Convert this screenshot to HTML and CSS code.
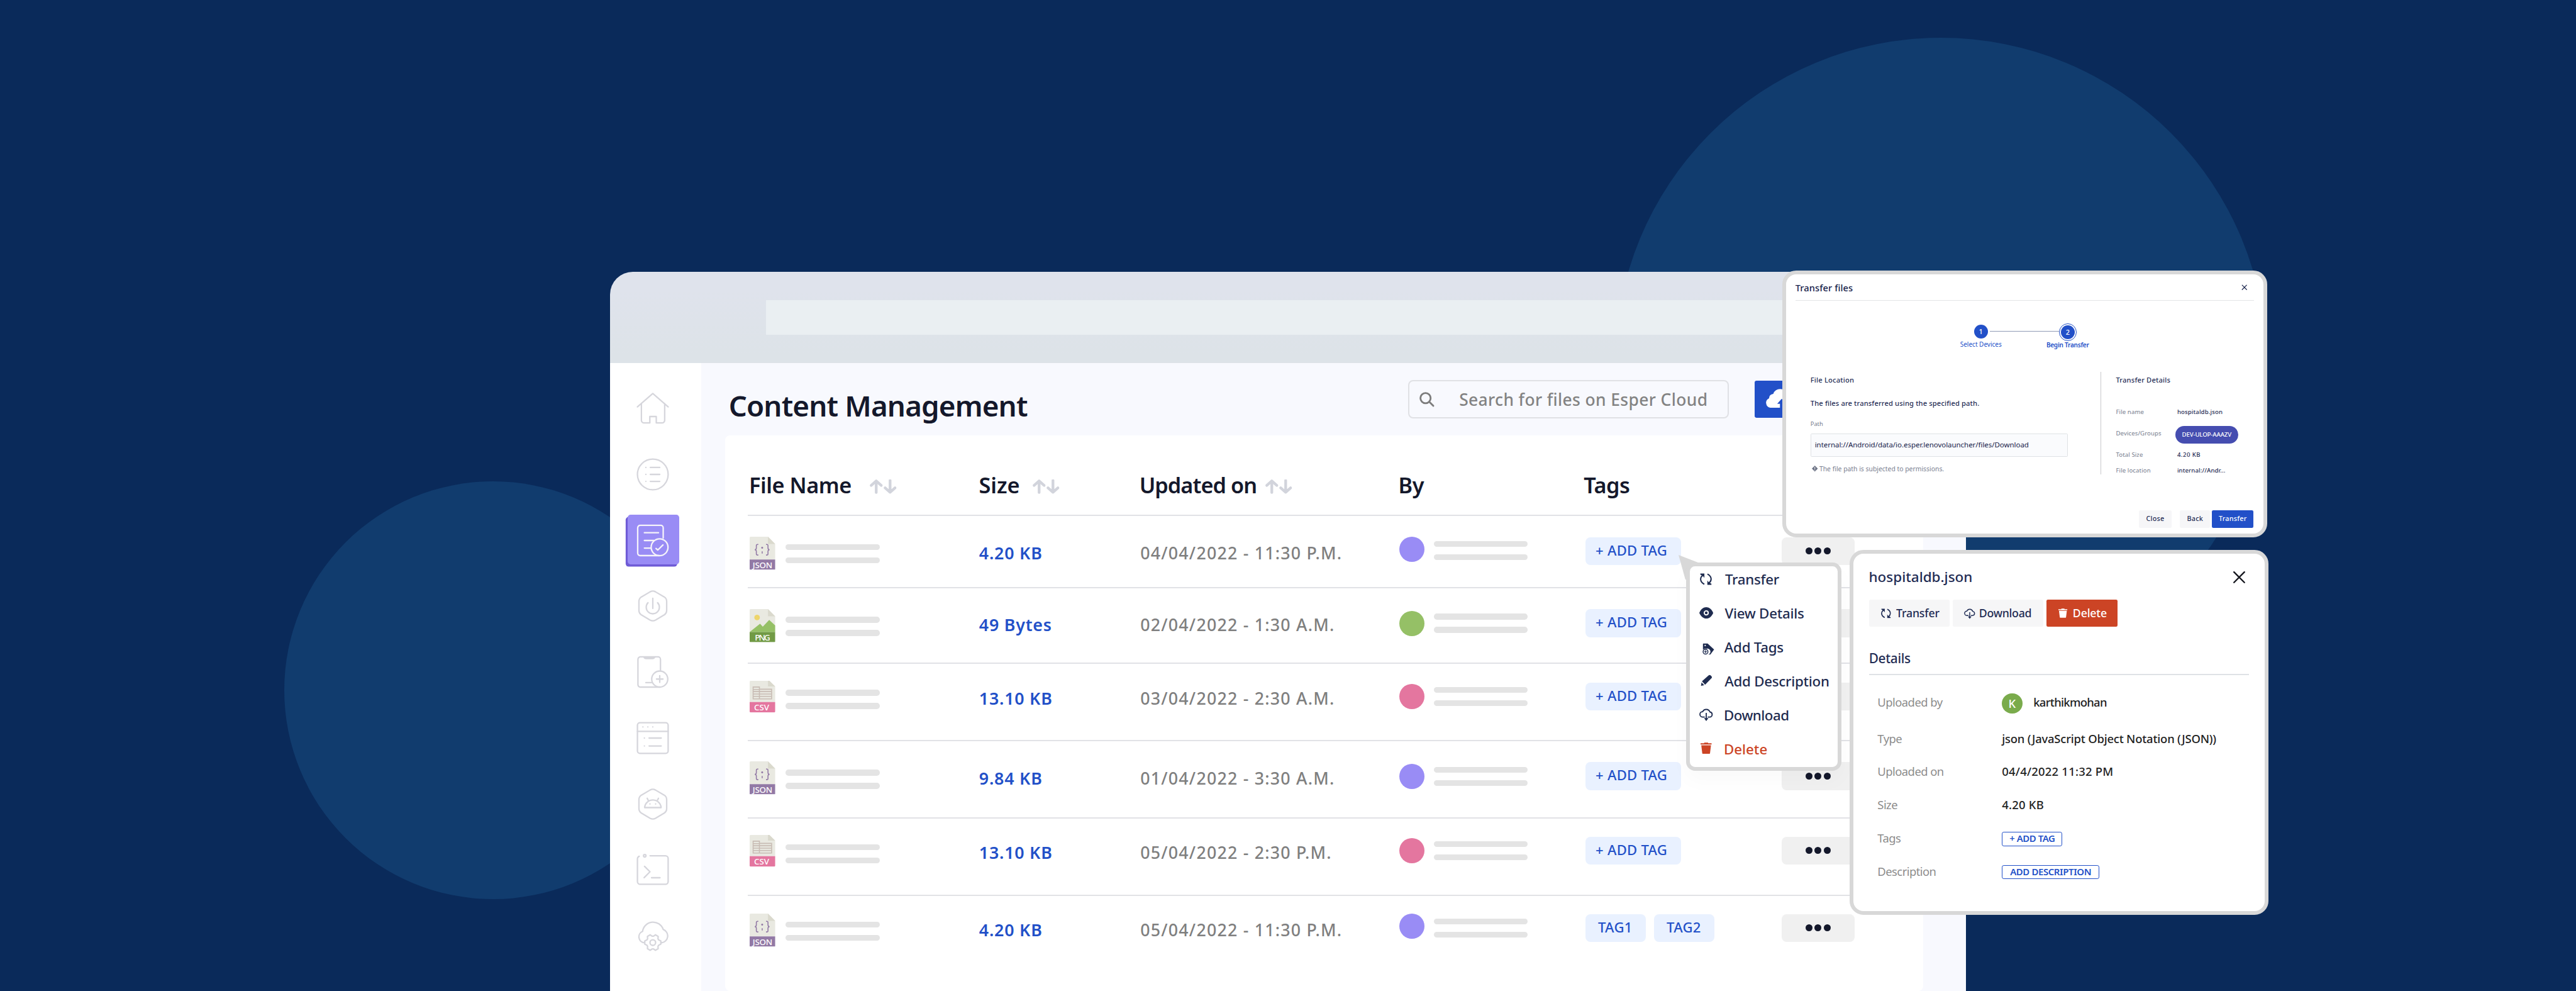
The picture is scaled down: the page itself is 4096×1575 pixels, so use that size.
FILE: index.html
```html
<!DOCTYPE html>
<html lang="en">
<head>
<meta charset="utf-8">
<title>Content Management</title>
<link rel="stylesheet" href="styles.css">
</head>
<body>
<svg class="defs" aria-hidden="true">
  <defs>
    <symbol id="sort" viewBox="0 0 54 29"><path d="M13 26.500V3M3 12 13 3l10 9M41 2v23.500M31 17l10 9 10-9"/></symbol>
    <symbol id="hex" viewBox="0 0 66 66"><path d="M27.500 4.600q5.500-3 11 0L56 14.800q5 3.200 5 9V42q0 6-5 9.200L38.500 61.500q-5.500 3-11 0L10 51.200q-5-3.200-5-9.200V24q0-6 5-9.200Z"/></symbol>
    <symbol id="json" viewBox="0 0 52 67">
      <path d="M2 0H37L51.500 14.500V46H0V2Q0 0 2 0Z" fill="#e9e9e1"/><path d="M37 0 51.500 14.500H37Z" fill="#dad9cd"/>
      <path d="M0 46H51.500V65Q51.500 66.500 50 66.500H1.500Q0 66.500 0 65Z" fill="#9279a5"/>
      <path d="M17.500 15.500h-1.500q-2.500 0-2.500 2.500v5q0 3-3 3.300q3 .3 3 3.300v4.900q0 2.500 2.500 2.500h1.500M33 15.500h1.500q2.500 0 2.500 2.500v5q0 3 3 3.300q-3 .3-3 3.300v4.900q0 2.500-2.500 2.500H33M25.300 29.500v4.500" fill="none" stroke="#9279a5" stroke-width="2"/>
      <circle cx="25.300" cy="22.300" r="1.900" fill="#9279a5"/>
      <text x="6" y="63.300" font-size="17" textLength="40" fill="#fff">JSON</text>
    </symbol>
    <symbol id="png" viewBox="0 0 52 67">
      <path d="M2 0H37L51.500 14.500V46.300H0V2Q0 0 2 0Z" fill="#e9e9e1"/><path d="M37 0 51.500 14.500H37Z" fill="#dad9cd"/>
      <circle cx="15" cy="17" r="5.600" fill="#eed56b"/>
      <path d="M0 46.500 21 29.500 26.500 35.500 39.500 22 51.500 33V46.500Z" fill="#95c066"/>
      <path d="M0 46.500H51.500V65Q51.500 66.800 50 66.800H1.500Q0 66.800 0 65Z" fill="#719a45"/>
      <text x="10.500" y="63.300" font-size="17" textLength="31" fill="#fff">PNG</text>
    </symbol>
    <symbol id="csv" viewBox="0 0 52 64">
      <path d="M2 0H40L51.500 11.500V43H0V2Q0 0 2 0Z" fill="#e9e9e1"/><path d="M37 0H40L51.500 11.500H37Z" fill="#dad9cd"/>
      <path d="M0 43H51.500V62Q51.500 63.700 50 63.700H1.500Q0 63.700 0 62Z" fill="#e4769f"/>
      <path d="M7 12.500H19.700V36.500H7ZM19.700 17H44.300V36.500H19.700ZM7 17.500H19.700M7 21.700H44.300M7 26.600H44.300M7 31.500H44.300" fill="none" stroke="#c8bcb4" stroke-width="2"/>
      <text x="9" y="60.300" font-size="17" textLength="30.500" fill="#fff">CSV</text>
    </symbol>
    <symbol id="transfer" viewBox="0 0 24 24">
      <g fill="none" stroke="currentColor" stroke-width="2.600"><path d="M8.800 22.200C-.500 17.500-.200 9 5.500 4.500"/><path d="M15.200 1.800C24.500 6.500 24.200 15 18.500 19.500"/></g>
      <path d="M.800.600H9V9.500L6.500 6 .800 2.800ZM23.200 23.400H15V14.500L17.500 18 23.200 21.200Z" fill="currentColor"/>
    </symbol>
    <symbol id="eye" viewBox="0 0 28 23"><path d="M0 11.500C6-3.800 22-3.800 28 11.500 22 26.800 6 26.800 0 11.500Z" fill="currentColor"/><circle cx="14" cy="11.500" r="4" fill="none" stroke="#fff" stroke-width="2.400"/></symbol>
    <symbol id="tags" viewBox="0 0 24 24">
      <path d="M1 1.800Q1 .8 2 .8H10.500L23.500 13 16 23.200H12A6 6 0 0 0 8 11.500Q4 10.500 1 13.500Z" fill="currentColor"/><circle cx="5.500" cy="5" r="1.400" fill="#fff"/>
      <circle cx="6.200" cy="17.500" r="4.900" fill="#fff" stroke="currentColor" stroke-width="1.800"/><path d="M6.200 14.500v6M3.200 17.500h6" stroke="currentColor" stroke-width="1.500"/>
    </symbol>
    <symbol id="pencil" viewBox="0 0 24 24"><path d="M16.500 1.500Q18.500 0 20.500 1.800L22.300 3.800Q23.600 5.500 22.500 7L9.200 20.700 2.800 13.800ZM2 15.800 7.400 21.500.800 23Z" fill="currentColor"/></symbol>
    <symbol id="download" viewBox="0 0 28 26"><g fill="none" stroke="currentColor" stroke-width="2.300"><path d="M11 17.200H6.500A5.300 5.300 0 0 1 6.800 6.500 8 8 0 0 1 21.500 7 5.200 5.200 0 0 1 22 17.200H17"/><path d="M14 9V22" /></g><path d="M9.500 19.500H18.500L14 25.500Z" fill="currentColor"/></symbol>
    <symbol id="trash" viewBox="0 0 23 23"><path d="M0 1.500H7.500V0H15.500V1.500H23V4H0ZM1.500 5.500H21.500L19.500 22Q19.400 23 18.400 23H4.600Q3.600 23 3.500 22Z" fill="currentColor"/></symbol>
  </defs>
</svg>

<div class="stage">
  <div class="disc disc-left"></div>
  <div class="disc disc-right"></div>

  <div class="window">
    <div class="browser-bar"><div class="url"></div></div>
    <div class="body">
      <nav class="sidebar">
        <svg class="nav" viewBox="0 0 66 66"><path d="M2 30 33 3 64 30M10 23.500V57a5.500 5.500 0 0 0 5.500 5.500H27V49.500H40V62.500H51.500A5.500 5.500 0 0 0 57 57V23.500"/></svg>
        <svg class="nav" viewBox="0 0 66 66"><circle cx="33" cy="33" r="31"/><path d="M28 19H47M28 33H47M28 47H47M19 19h.01M19 33h.01M19 47h.01"/></svg>
        <div class="active"><svg class="nav" viewBox="0 0 66 66"><path d="M54 28V7.500A5 5 0 0 0 49 2.500H7.500A5 5 0 0 0 2.500 7.500V58.500A5 5 0 0 0 7.500 63.500H46M16 17.300H44.500M16 33H35M16 48.300H29M39.500 49 43 52.300 53.500 42"/><circle cx="46.700" cy="46.700" r="17"/></svg></div>
        <svg class="nav" viewBox="0 0 66 66"><use href="#hex"/><path d="M33 17.500V38M23.300 26.500A13.300 13.300 0 1 0 42.700 26.500"/></svg>
        <svg class="nav" viewBox="0 0 66 66"><path d="M48.500 30V7.500A5 5 0 0 0 43.500 2.500H8A5 5 0 0 0 3 7.500V58.500A5 5 0 0 0 8 63.500H47M19 54.500H31M47 40.500V54M40.500 47.300H53.500"/><path d="M15 3H37Q35.500 6 32.500 6H19.500Q16.500 6 15 3Z" class="solid"/><circle cx="47" cy="47.300" r="16.200"/></svg>
        <svg class="nav" viewBox="0 0 66 66"><rect x="2" y="2" width="62" height="62" rx="5"/><path d="M2 19.500H64M13 10.500h.01M23 10.500h.01M33 10.500h.01M16 33h.01M16 49h.01M25.500 33H50M25.500 49H50"/></svg>
        <svg class="nav" viewBox="0 0 66 66"><use href="#hex"/><path d="M16.500 40A16.700 16.700 0 0 1 49.800 40ZM23.800 25.500 21.700 21.300M42.300 25.500 44.400 21.300M27.300 32.700h.01M38.700 32.700h.01"/></svg>
        <svg class="nav" viewBox="0 0 66 66"><path d="M27.500 5.200H58.500A5.500 5.500 0 0 1 64 10.700V57.300A5.500 5.500 0 0 1 58.500 62.800H7.500A5.500 5.500 0 0 1 2 57.300V11.500Q2 8 5.500 6.200M16.300 26.500 27.300 37.500 15.500 49.300M30.500 49.500H47.500"/><circle cx="16.700" cy="5.200" r="2.500"/></svg>
        <svg class="nav" viewBox="0 0 66 66"><path d="M16 47.500A12 12 0 0 1 12.300 24.500 21.500 21.500 0 0 1 54 20.500 14 14 0 0 1 50.700 47.500"/><path transform="translate(33 47)" d="M16.200-3.100V3.100L11.900 5.300 10.500 7.600 10.800 12.400 5.400 15.600 1.400 12.900H-1.400L-5.400 15.600-10.800 12.400-10.500 7.600-11.900 5.300-16.200 3.100V-3.100L-11.900-5.300-10.500-7.600-10.800-12.400-5.400-15.600-1.400-12.900H1.400L5.400-15.600 10.800-12.400 10.500-7.600 11.900-5.300Z"/><circle cx="33" cy="47" r="5.700"/></svg>
      </nav>

      <main class="main">
        <header class="page-head">
          <h1>Content Management</h1>
          <div class="search">
            <svg viewBox="0 0 30 30"><circle cx="12.300" cy="12.300" r="10.300"/><path d="M20 20 28 28"/></svg>
            <span>Search for files on Esper Cloud</span>
          </div>
          <div class="upload"><svg viewBox="0 0 60 40"><path d="M10 38A10 10 0 0 1 7.500 19 9 9 0 0 1 16 10 15 15 0 0 1 44 10 12 12 0 0 1 50 38Z" fill="#fff"/><path d="M33 20 42 30H36.500V40H29.500V30H24Z" fill="#2250c8"/></svg></div>
        </header>

        <section class="table">
          <div class="head grid">
            <div class="file-h">File Name<svg><use href="#sort"/></svg></div>
            <div class="size-h">Size<svg><use href="#sort"/></svg></div>
            <div class="upd-h">Updated on<svg><use href="#sort"/></svg></div>
            <div class="by-h">By</div>
            <div>Tags</div>
          </div>
          <div class="row grid r1">
            <div class="file"><svg><use href="#json"/></svg><div class="bars"><i></i><i></i></div></div>
            <div class="size">4.20 KB</div><div class="date">04/04/2022 - 11:30 P.M.</div>
            <div class="by violet"><b></b><div class="bars"><i></i><i></i></div></div>
            <div class="tags"><span>+ ADD TAG</span></div><div class="more"><i></i><i></i><i></i></div>
          </div>
          <div class="row grid r2">
            <div class="file"><svg><use href="#png"/></svg><div class="bars"><i></i><i></i></div></div>
            <div class="size">49 Bytes</div><div class="date">02/04/2022 - 1:30 A.M.</div>
            <div class="by green"><b></b><div class="bars"><i></i><i></i></div></div>
            <div class="tags"><span>+ ADD TAG</span></div><div class="more"><i></i><i></i><i></i></div>
          </div>
          <div class="row grid r3">
            <div class="file"><svg class="csv"><use href="#csv"/></svg><div class="bars"><i></i><i></i></div></div>
            <div class="size">13.10 KB</div><div class="date">03/04/2022 - 2:30 A.M.</div>
            <div class="by pink"><b></b><div class="bars"><i></i><i></i></div></div>
            <div class="tags"><span>+ ADD TAG</span></div><div class="more"><i></i><i></i><i></i></div>
          </div>
          <div class="row grid r4">
            <div class="file"><svg><use href="#json"/></svg><div class="bars"><i></i><i></i></div></div>
            <div class="size">9.84 KB</div><div class="date">01/04/2022 - 3:30 A.M.</div>
            <div class="by violet"><b></b><div class="bars"><i></i><i></i></div></div>
            <div class="tags"><span>+ ADD TAG</span></div><div class="more"><i></i><i></i><i></i></div>
          </div>
          <div class="row grid r5">
            <div class="file"><svg class="csv"><use href="#csv"/></svg><div class="bars"><i></i><i></i></div></div>
            <div class="size">13.10 KB</div><div class="date">05/04/2022 - 2:30 P.M.</div>
            <div class="by pink"><b></b><div class="bars"><i></i><i></i></div></div>
            <div class="tags"><span>+ ADD TAG</span></div><div class="more"><i></i><i></i><i></i></div>
          </div>
          <div class="row grid r6">
            <div class="file"><svg><use href="#json"/></svg><div class="bars"><i></i><i></i></div></div>
            <div class="size">4.20 KB</div><div class="date">05/04/2022 - 11:30 P.M.</div>
            <div class="by violet"><b></b><div class="bars"><i></i><i></i></div></div>
            <div class="tags"><span class="short">TAG1</span><span class="short">TAG2</span></div><div class="more"><i></i><i></i><i></i></div>
          </div>
        </section>
      </main>
    </div>
  </div>

  <div class="menu">
    <svg class="tail" viewBox="0 0 50 50"><path d="M0 0 50 19.500 14 50Z" fill="#d8d8d8"/></svg>
    <ul>
      <li><svg class="m-transfer"><use href="#transfer"/></svg>Transfer</li>
      <li><svg class="m-eye"><use href="#eye"/></svg>View Details</li>
      <li><svg class="m-tags"><use href="#tags"/></svg>Add Tags</li>
      <li><svg class="m-pencil"><use href="#pencil"/></svg>Add Description</li>
      <li class="tight"><svg class="m-download"><use href="#download"/></svg>Download</li>
      <li class="danger"><svg class="m-trash"><use href="#trash"/></svg>Delete</li>
    </ul>
  </div>

  <section class="card transfer-card">
    <header><h2>Transfer files</h2><svg viewBox="0 0 12 12"><path d="M1.500 1.500 10.500 10.500M10.500 1.500 1.500 10.500"/></svg></header>
    <div class="steps">
      <div class="step one"><b>1</b><span>Select Devices</span></div>
      <div class="connector"></div>
      <div class="step two"><div class="ring"><b>2</b></div><span>Begin Transfer</span></div>
    </div>
    <div class="columns">
      <div class="location">
        <h3>File Location</h3>
        <p class="info">The files are transferred using the specified path.</p>
        <p class="label">Path</p>
        <div class="input">internal://Android/data/io.esper.lenovolauncher/files/Download</div>
        <p class="note"><svg viewBox="0 0 12 12"><path d="M6 0 12 6 6 12 0 6Z" fill="#6d7486"/><path d="M6 2.800V7M6 8.200V9.400" stroke="#fff" stroke-width="1.300"/></svg>The file path is subjected to permissions.</p>
      </div>
      <div class="details">
        <h3>Transfer Details</h3>
        <dl>
          <div class="d1"><dt>File name</dt><dd>hospitaldb.json</dd></div>
          <div class="d2"><dt>Devices/Groups</dt><dd><span class="pill">DEV-ULOP-AAAZV</span></dd></div>
          <div class="d3"><dt>Total Size</dt><dd class="wide">4.20 KB</dd></div>
          <div class="d4"><dt>File location</dt><dd>internal://Andr...</dd></div>
        </dl>
      </div>
    </div>
    <footer><span class="btn close">Close</span><span class="btn back">Back</span><span class="btn go">Transfer</span></footer>
  </section>

  <section class="card file-card">
    <header><h2>hospitaldb.json</h2><svg viewBox="0 0 24 24"><path d="M1.500 1.500 22.500 22.500M22.500 1.500 1.500 22.500"/></svg></header>
    <div class="actions">
      <span class="act a-transfer"><svg><use href="#transfer"/></svg>Transfer</span>
      <span class="act a-download"><svg><use href="#download"/></svg>Download</span>
      <span class="act a-delete"><svg><use href="#trash"/></svg>Delete</span>
    </div>
    <h3>Details</h3>
    <dl>
      <div class="f1"><dt>Uploaded by</dt><dd class="user"><b>K</b>karthikmohan</dd></div>
      <div><dt>Type</dt><dd>json (JavaScript Object Notation (JSON))</dd></div>
      <div><dt>Uploaded on</dt><dd class="num">04/4/2022 11:32 PM</dd></div>
      <div><dt>Size</dt><dd class="num">4.20 KB</dd></div>
      <div><dt>Tags</dt><dd><span class="outline o-tag">+ ADD TAG</span></dd></div>
      <div><dt>Description</dt><dd><span class="outline o-desc">ADD DESCRIPTION</span></dd></div>
    </dl>
  </section>
</div>
</body>
</html>
```
FILE: styles.css
```css
/* 1rem is a hundred design units; the artboard is 52rem by 20rem */
html { font-size: 78.769px; }
body { margin: 0; font-family: "Noto Sans", sans-serif; font-weight: 500; color: #14182b; background: #0a2a5a; overflow: hidden; }
*, *::before, *::after { box-sizing: border-box; }
h1, h2, h3, p, ul, dl, dd { margin: 0; padding: 0; font-size: inherit; font-weight: inherit; }
svg { display: block; flex: none; overflow: visible; }
.defs { position: absolute; width: 0; height: 0; }

.stage { position: relative; width: 52rem; height: 19.995rem; overflow: hidden; background: #0a2a5a; white-space: nowrap; font-size: .24rem; }
.disc { position: absolute; border-radius: 50%; background: #113c6e; }
.disc-left { left: 5.74rem; top: 9.71rem; width: 8.43rem; height: 8.43rem; }
.disc-right { left: 32.6rem; top: .76rem; width: 13.16rem; height: 13.16rem; }

/* browser window */
.window { position: absolute; left: 12.31rem; top: 5.49rem; width: 27.38rem; height: 14.51rem; display: flex; flex-direction: column; border-radius: .46rem .46rem 0 0; overflow: hidden; }
.browser-bar { height: 1.83rem; flex: none; padding: .568rem 1.5rem 0 3.157rem; background: linear-gradient(180deg, #dfe3ec 20%, #dde3e8 90%); }
.url { height: .7rem; background: #eaeff2; }
.body { flex: 1; display: flex; min-height: 0; }
.sidebar { width: 1.848rem; flex: none; background: #fff; display: flex; flex-direction: column; gap: .67rem; padding: .59rem 0 0 .54rem; }
.nav { width: .66rem; height: .66rem; fill: none; stroke: #d6d6dc; stroke-width: 2.9; stroke-linecap: round; stroke-linejoin: round; }
.solid { fill: #d6d6dc; }
.active { width: 1.04rem; height: 1rem; margin: -.185rem 0 -.155rem -.18rem; padding: .185rem 0 0 .18rem; border-radius: .06rem; background: #998cf5; box-shadow: -.04rem .045rem 0 #6f5bd6; }
.active .nav { stroke: #f5f3fa; }

.main { flex: 1; display: flex; flex-direction: column; padding: 0 .87rem 0 .477rem; background: #f8f9fe; }
.page-head { height: 1.47rem; flex: none; display: flex; padding-left: .075rem; }
h1 { width: 13.71rem; padding-top: .56rem; font-size: .58rem; line-height: .6rem; font-weight: 600; letter-spacing: -.0105rem; }
.search { width: 6.485rem; height: .775rem; margin: .35rem .515rem 0 0; display: flex; align-items: center; gap: .5rem; padding-left: .21rem; border: .028rem solid #e0e1e5; border-radius: .1rem; font-size: .335rem; letter-spacing: .005rem; color: #838383; }
.search svg { width: .3rem; height: .3rem; fill: none; stroke: #7c7c7c; stroke-width: 3.6; stroke-linecap: round; }
.upload { width: 2.4rem; height: .755rem; margin-top: .36rem; padding: .17rem 0 0 .22rem; border-radius: .04rem; background: #2250c8; }
.upload svg { width: .6rem; height: .4rem; }

.table { flex: 1; padding: 0 .46rem; background: #fff; border-radius: .1rem; }
.grid { display: grid; grid-template-columns: 4.655rem 3.235rem 5.225rem 3.76rem 4rem 1fr; align-items: start; border-bottom: .03rem solid #e1e2e6; }
.head { height: 1.625rem; padding-top: .75rem; font-size: .435rem; line-height: .5rem; font-weight: 600; letter-spacing: -.0055rem; }
.head > div { display: flex; align-items: center; }
.head svg { width: .54rem; height: .29rem; margin-top: .055rem; fill: none; stroke: #d2d4dc; stroke-width: 5.5; stroke-linecap: round; stroke-linejoin: round; }
.file-h { gap: .37rem; padding-left: .025rem; }
.size-h { gap: .265rem; letter-spacing: 0; padding-left: .01rem; }
.upd-h { gap: .17rem; letter-spacing: -.0117rem; padding-left: .015rem; }
.by-h { padding-left: .02rem; }

/* every row carries its own vertical rhythm */
.row { height: var(--h); }
.r1 { --h: 1.455rem; --icon: .41rem; --bars: .565rem; --text: .547rem; --by: .415rem; --lines: .504rem; --tag: .422rem; }
.r2 { --h: 1.53rem; --icon: .42rem; --bars: .575rem; --text: .538rem; --by: .452rem; --lines: .51rem; --tag: .425rem; }
.r3 { --h: 1.56rem; --icon: .34rem; --bars: .52rem; --text: .488rem; --by: .397rem; --lines: .46rem; --tag: .37rem; }
.r4 { --h: 1.555rem; --icon: .4rem; --bars: .57rem; --text: .538rem; --by: .448rem; --lines: .51rem; --tag: .42rem; }
.r5 { --h: 1.56rem; --icon: .335rem; --bars: .52rem; --text: .488rem; --by: .397rem; --lines: .458rem; --tag: .368rem; }
.r6 { --h: 1.9rem; --icon: .36rem; --bars: .52rem; --text: .483rem; --by: .363rem; --lines: .455rem; --tag: .368rem; border: 0; }
.file { display: flex; gap: .21rem; padding-left: .035rem; }
.file svg { width: .52rem; height: .67rem; margin-top: var(--icon); font-weight: 500; }
.file svg.csv { height: .64rem; }
.bars { display: flex; flex-direction: column; gap: .147rem; }
.file .bars { margin-top: var(--bars); }
.by .bars { margin-top: var(--lines); }
.bars i { width: 1.9rem; height: .12rem; border-radius: .06rem; background: #e4e4e4; }
.size, .date { margin-top: var(--text); line-height: .4rem; font-size: .34rem; }
.size { padding-left: .015rem; font-weight: 600; letter-spacing: .01rem; color: #2250c8; }
.date { padding-left: .035rem; letter-spacing: .0155rem; color: #7f7f7f; }
.by { display: flex; gap: .18rem; padding-left: .04rem; }
.by b { width: .51rem; height: .51rem; margin-top: var(--by); border-radius: 50%; }
.violet b { background: #998cf5; }
.green b { background: #95c066; }
.pink b { background: #e4769f; }
.tags { display: flex; gap: .165rem; padding-left: .04rem; margin-top: var(--tag); }
.tags span { width: 1.93rem; height: .56rem; border-radius: .1rem; padding-left: .2rem; font-size: .28rem; line-height: .53rem; letter-spacing: .0035rem; color: #2250c8; background: #e9f1ff; }
.tags .short { width: 1.22rem; padding-left: .25rem; }
.more { width: 1.465rem; height: .56rem; margin-top: var(--tag); display: flex; align-items: center; justify-content: center; gap: .045rem; border-radius: .1rem; background: #f0f0f0; }
.more i { width: .14rem; height: .14rem; border-radius: 50%; background: #14182b; }

/* context menu */
.menu { position: absolute; left: 34.03rem; top: 11.347rem; color: #1f2c50; }
.tail { position: absolute; left: -.14rem; top: -.145rem; width: .5rem; height: .5rem; }
.menu ul { position: relative; width: 3.146rem; height: 4.207rem; padding: .072rem 0 0 .192rem; list-style: none; border: .078rem solid #d8d8d8; border-radius: .18rem; background: #fff; box-shadow: 0 .2rem .4rem rgba(0, 0, 0, .025); }
.menu li { height: .684rem; display: flex; font-size: .283rem; line-height: .41rem; letter-spacing: -.0032rem; }
.menu li.tight { letter-spacing: -.0066rem; }
.menu li.danger { color: #cc4425; letter-spacing: 0; }
.m-transfer { width: .24rem; height: .24rem; margin: .065rem .265rem 0 .02rem; }
.m-eye { width: .28rem; height: .23rem; margin: .07rem .24rem 0 0; }
.m-tags { width: .24rem; height: .24rem; margin: .11rem .2rem 0 .07rem; }
.m-pencil { width: .24rem; height: .24rem; margin: .065rem .25rem 0 .025rem; }
.m-download { width: .28rem; height: .26rem; margin: .06rem .22rem 0 0; }
.m-trash { width: .225rem; height: .23rem; margin: .065rem .25rem 0 .025rem; }

.card { position: absolute; display: flex; flex-direction: column; border: .08rem solid #d8d8d8; border-radius: .28rem; background: #fff; color: #1f2c54; }
.card header { display: flex; align-items: center; justify-content: space-between; }
.card header svg, .card header path { fill: none; stroke: currentColor; stroke-linecap: round; }

/* transfer dialog */
.transfer-card { left: 35.982rem; top: 5.46rem; width: 9.785rem; height: 5.386rem; }
.transfer-card header { height: .534rem; margin: 0 .19rem 0 .184rem; padding: .01rem .135rem 0 0; border-bottom: .018rem solid #e4e5e6; font-size: .186rem; letter-spacing: .001rem; color: #17224a; }
.transfer-card header svg { width: .12rem; height: .12rem; stroke-width: 1.5; }
.steps { height: 1.432rem; padding: .454rem 0 0 3.784rem; display: flex; color: #2250c8; }
.step { display: flex; flex-direction: column; align-items: center; font-size: .127rem; line-height: .16rem; }
.step b { width: .28rem; height: .28rem; border-radius: 50%; background: #2250c8; color: #fff; text-align: center; font-size: .14rem; line-height: .27rem; font-weight: 500; }
.one { width: .29rem; padding-top: .024rem; font-weight: 400; }
.one span { margin-top: .042rem; }
.two { width: .355rem; font-weight: 600; letter-spacing: -.0029rem; }
.two span { margin-top: .004rem; }
.ring { width: .355rem; height: .355rem; display: flex; align-items: center; justify-content: center; flex: none; border: .013rem solid #2250c8; border-radius: 50%; }
.connector { width: 1.4rem; height: .013rem; margin: .15rem 0 0 .03rem; background: #8f9bb5; }
.columns { display: flex; height: 2.07rem; }
.location { width: 6.36rem; padding: .07rem 0 0 .489rem; border-right: .015rem solid #c9c9cc; }
.card .columns h3 { font-size: .142rem; line-height: .21rem; height: .2rem; letter-spacing: .0022rem; }
.info { margin-top: .268rem; font-size: .142rem; line-height: .2rem; letter-spacing: .0016rem; }
.label { margin-top: .24rem; font-size: .118rem; line-height: .16rem; font-weight: 400; color: #757b8c; }
.input { width: 5.195rem; height: .463rem; margin-top: .109rem; padding-left: .075rem; border: .018rem solid #dfe2e5; border-radius: .02rem; background: #fafbfd; font-size: .146rem; line-height: .427rem; letter-spacing: -.0005rem; font-weight: 400; color: #17224a; }
.note { display: flex; align-items: center; gap: .035rem; margin-top: .156rem; padding-left: .025rem; font-size: .132rem; line-height: .18rem; font-weight: 400; color: #7a8091; }
.note svg { width: .12rem; height: .12rem; }
.details { padding: .07rem 0 0 .295rem; }
.details dl > div { display: flex; align-items: center; font-size: .122rem; line-height: .16rem; letter-spacing: .0014rem; }
.details dt { width: 1.237rem; font-weight: 400; color: #757b8c; }
.details .wide { letter-spacing: .006rem; }
.d1 { margin-top: .47rem; }
.d2 { height: .354rem; margin-top: .193rem; }
.d2 dt { margin-bottom: .05rem; }
.d3 { margin-top: .155rem; }
.d4 { margin-top: .16rem; }
.pill { display: block; width: 1.27rem; height: .354rem; margin-left: -.04rem; border-radius: .18rem; background: #454db0; color: #fff; text-align: center; line-height: .35rem; letter-spacing: -.0014rem; }
.transfer-card footer { display: flex; justify-content: flex-end; margin-top: .73rem; padding-right: .2rem; font-size: .137rem; letter-spacing: .003rem; }
.btn { height: .343rem; line-height: .335rem; text-align: center; border-radius: .03rem; background: #f6f6f8; }
.close { width: .65rem; margin-right: .176rem; }
.back { width: .604rem; margin-right: .04rem; }
.go { width: .84rem; background: #2250c8; color: #fff; }

/* file details card */
.file-card { left: 37.339rem; top: 11.099rem; width: 8.455rem; height: 7.357rem; }
.file-card header { padding: .268rem .394rem 0 .31rem; font-size: .285rem; line-height: .4rem; }
.file-card header svg { width: .24rem; height: .24rem; stroke-width: 3; color: #16181f; }
.actions { display: flex; gap: .069rem; margin: .258rem 0 0 .312rem; font-size: .225rem; line-height: .54rem; letter-spacing: -.002rem; }
.act { display: flex; height: .542rem; border-radius: .03rem; background: #f6f6f7; }
.act svg { width: .2rem; height: .2rem; margin-top: .17rem; }
.a-transfer { width: 1.623rem; gap: .11rem; padding-left: .24rem; }
.a-download { width: 1.826rem; gap: .08rem; padding-left: .224rem; letter-spacing: -.0034rem; }
.a-download svg { width: .228rem; height: .215rem; }
.a-delete { width: 1.43rem; gap: .105rem; padding-left: .242rem; background: #cc4425; color: #fff; }
.a-delete svg { width: .182rem; height: .19rem; margin-top: .18rem; }
.file-card h3 { margin: .449rem .316rem 0 .312rem; padding-bottom: .108rem; border-bottom: .035rem solid #dfe2e6; font-size: .264rem; line-height: .4rem; letter-spacing: -.004rem; }
.file-card dl { padding: .388rem 0 0 .485rem; }
.file-card dl > div { display: flex; height: .671rem; font-size: .234rem; line-height: .3rem; letter-spacing: -.0025rem; }
.file-card .f1 { height: .733rem; }
.file-card dt { width: 2.513rem; font-weight: 400; letter-spacing: -.007rem; color: #8c8c8c; }
.file-card dd { color: #222; }
.file-card dd.num { letter-spacing: .003rem; }
.file-card dd.user { display: flex; letter-spacing: -.0088rem; }
.user b { width: .41rem; height: .41rem; margin: -.024rem .225rem 0 0; border-radius: 50%; background: #7aab4c; color: #fff; text-align: center; line-height: .4rem; letter-spacing: 0; font-weight: 500; }
.outline { display: block; height: .285rem; margin-top: .026rem; border: .017rem solid #2250c8; border-radius: .04rem; text-align: center; font-size: .19rem; line-height: .25rem; font-weight: 600; letter-spacing: -.006rem; color: #2250c8; }
.o-tag { width: 1.22rem; }
.o-desc { width: 1.965rem; letter-spacing: -.005rem; }
```
